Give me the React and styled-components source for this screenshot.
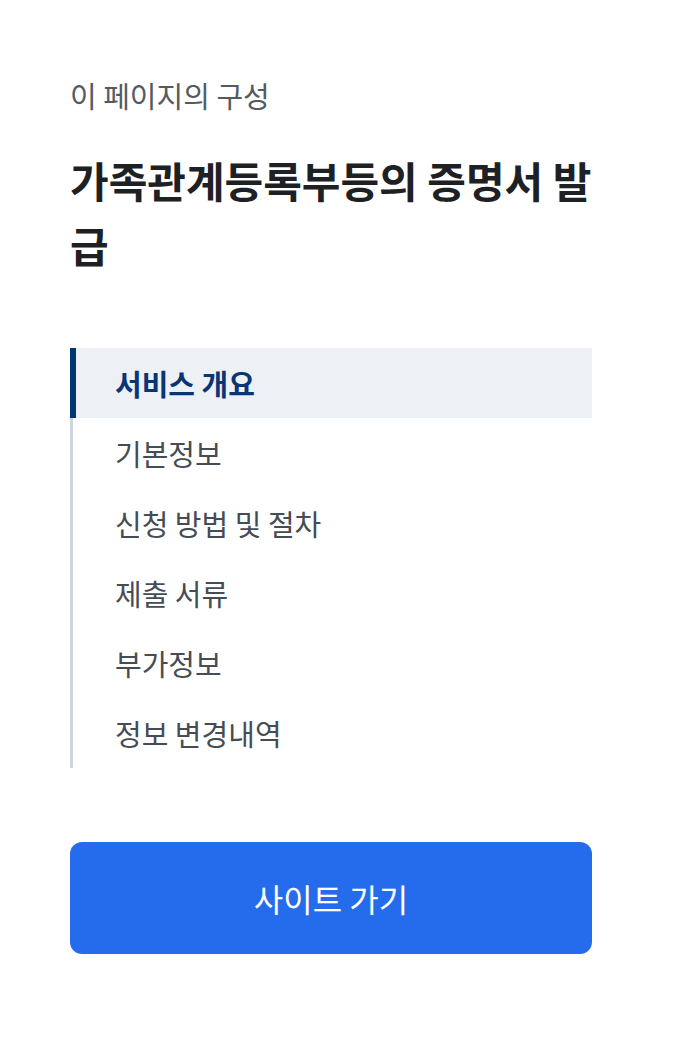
import React from "react";
import styled, { createGlobalStyle } from "styled-components";

const Global = createGlobalStyle`
  html, body { margin: 0; padding: 0; background: #fff; }
  body { font-family: "Noto Sans CJK KR", "Noto Sans", sans-serif; }
  * { box-sizing: border-box; }
`;

const Page = styled.div`
  width: 687px;
  padding: 75px 95px 100px 70px;
`;

const Subtitle = styled.p`
  margin: 0;
  font-size: 29px;
  line-height: 40px;
  color: #555a61;
  font-weight: 400;
`;

const Title = styled.h2`
  margin: 32px 0 0;
  font-size: 42px;
  line-height: 65px;
  font-weight: 700;
  color: #1e2124;
`;

const Nav = styled.ul`
  list-style: none;
  margin: 71px 0 0;
  padding: 0;
  border-left: 3px solid #cdd6e0;
`;

const Item = styled.li`
  height: 70px;
  display: flex;
  align-items: center;
  padding-left: ${(p) => (p.$active ? "39px" : "42px")};
  margin-left: ${(p) => (p.$active ? "-3px" : "0")};
  border-left: ${(p) => (p.$active ? "6px solid #003675" : "none")};
  background: ${(p) => (p.$active ? "#edf0f5" : "transparent")};
  font-size: 29px;
  font-weight: ${(p) => (p.$active ? 700 : 400)};
  color: ${(p) => (p.$active ? "#0a3575" : "#464c53")};
`;

const Button = styled.button`
  margin-top: 74px;
  width: 100%;
  height: 112px;
  border: none;
  border-radius: 12px;
  background: #256ced;
  color: #fff;
  font-family: inherit;
  font-size: 32px;
  font-weight: 400;
  display: flex;
  align-items: center;
  justify-content: center;
`;

const items = ["서비스 개요", "기본정보", "신청 방법 및 절차", "제출 서류", "부가정보", "정보 변경내역"];

export default function App() {
  return (
    <>
      <Global />
      <Page>
        <Subtitle>이 페이지의 구성</Subtitle>
        <Title>가족관계등록부등의 증명서 발급</Title>
        <Nav>
          {items.map((t, i) => (
            <Item key={t} $active={i === 0}>{t}</Item>
          ))}
        </Nav>
        <Button>사이트 가기</Button>
      </Page>
    </>
  );
}
